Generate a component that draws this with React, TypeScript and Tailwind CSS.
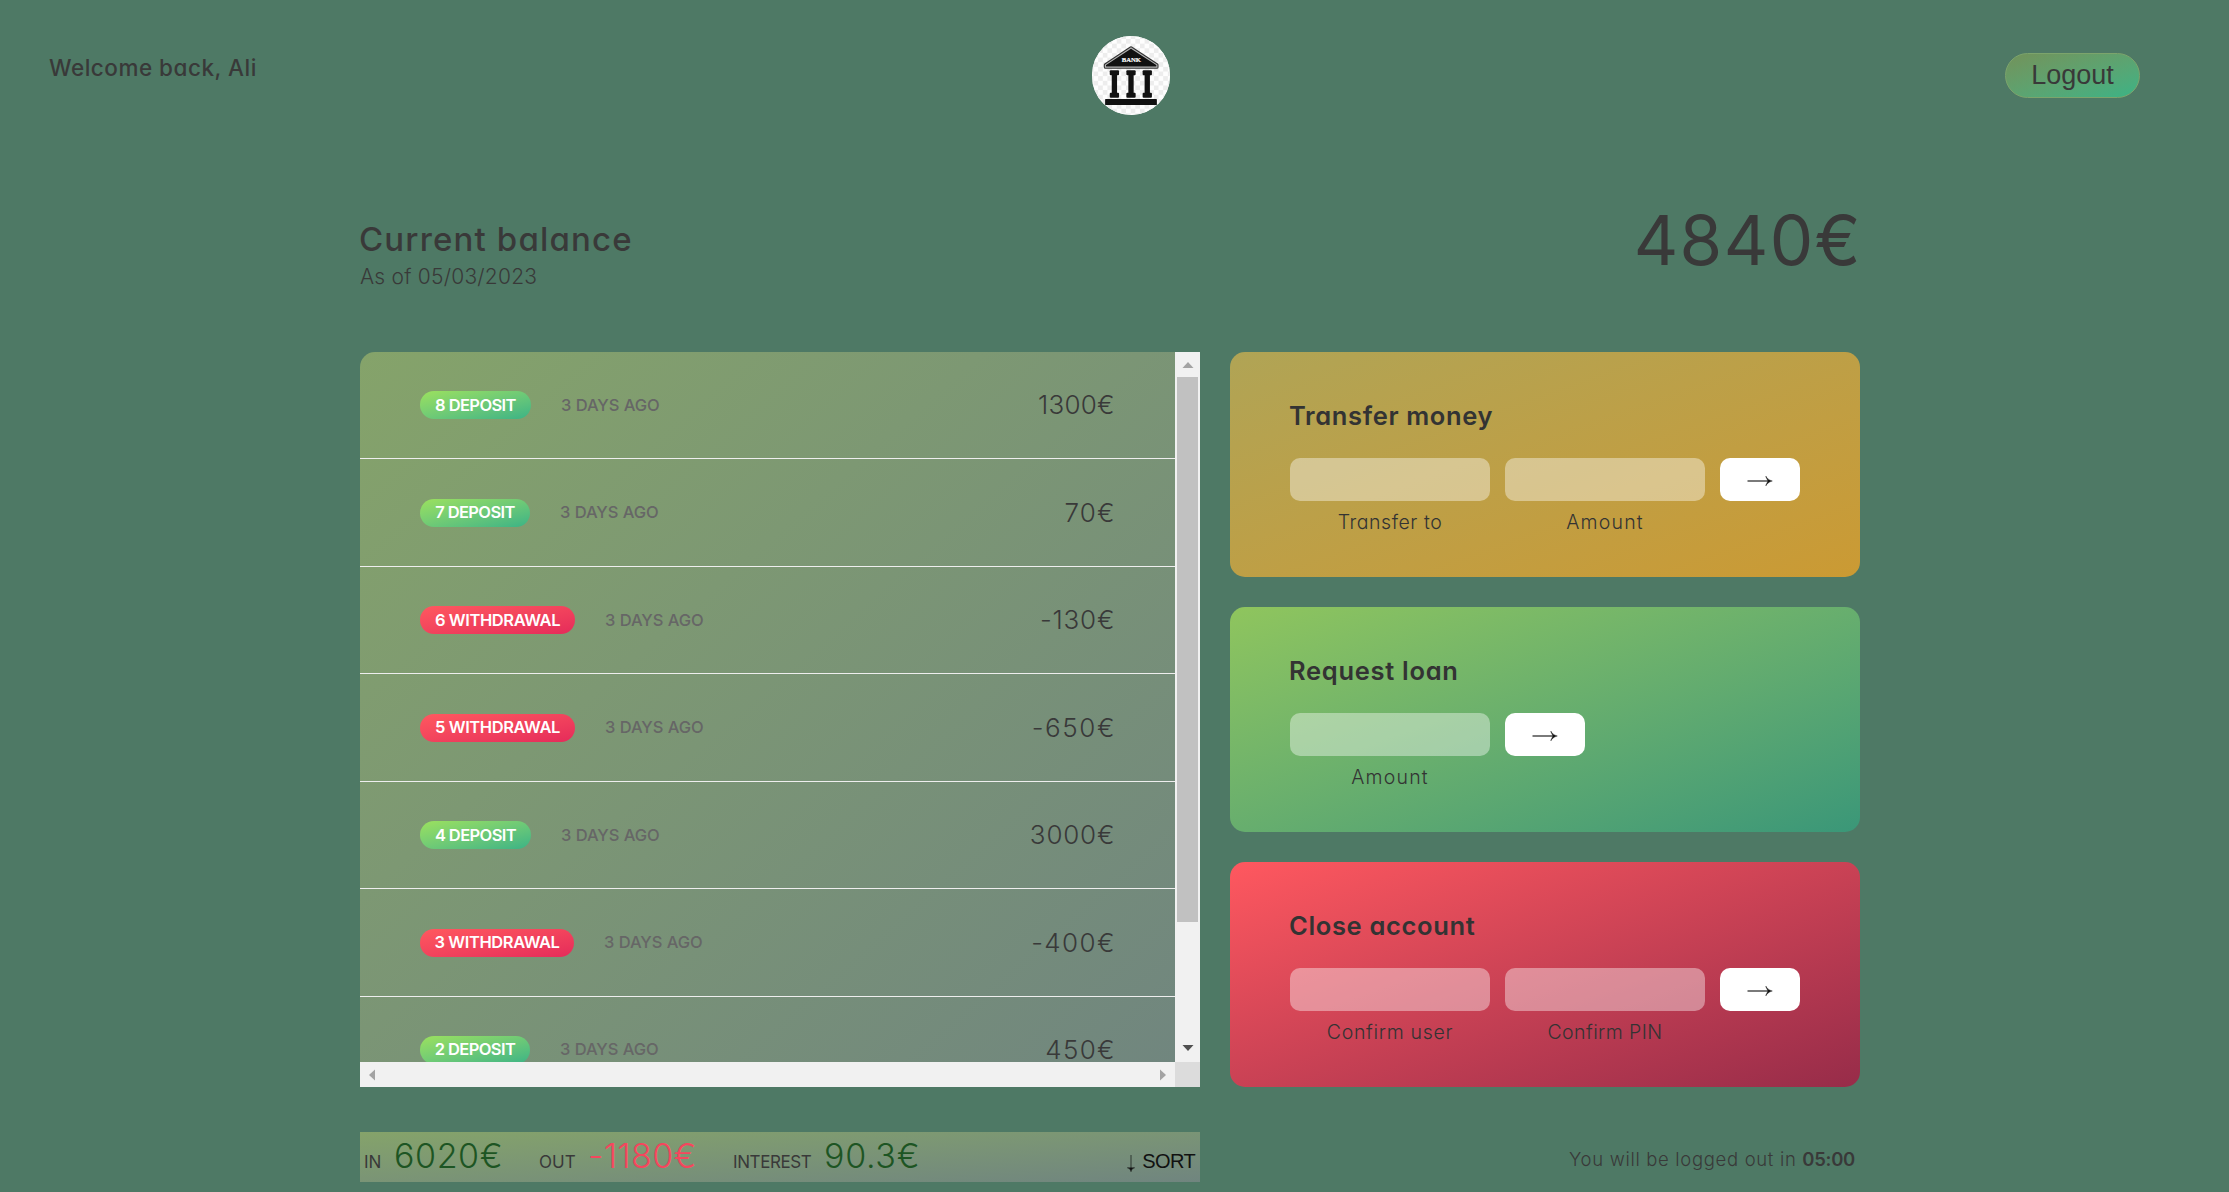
import type { ReactNode } from "react";

type Movement = {
  id: number;
  kind: "deposit" | "withdrawal";
  value: string;
  pill: string;
  row: string;
  tracking: string;
};

const movements: Movement[] = [
  { id: 8, kind: "deposit", value: "1300€", pill: "w-[111px]", row: "h-[107px]", tracking: "tracking-[0.2px] mr-[0.3px]" },
  { id: 7, kind: "deposit", value: "70€", pill: "w-[110px]", row: "h-[108px]", tracking: "tracking-[1.2px] -mr-[0.7px]" },
  { id: 6, kind: "withdrawal", value: "-130€", pill: "w-[155px]", row: "h-[107px]", tracking: "tracking-[0.8px] -mr-[0.3px]" },
  { id: 5, kind: "withdrawal", value: "-650€", pill: "w-[155px]", row: "h-[108px]", tracking: "tracking-[1.6px] -mr-[1.1px]" },
  { id: 4, kind: "deposit", value: "3000€", pill: "w-[111px]", row: "h-[107px]", tracking: "tracking-[0.8px] -mr-[0.3px]" },
  { id: 3, kind: "withdrawal", value: "-400€", pill: "w-[154px]", row: "h-[108px]", tracking: "tracking-[1.4px] -mr-[0.9px]" },
  { id: 2, kind: "deposit", value: "450€", pill: "w-[110px]", row: "h-[106px]", tracking: "tracking-[1.3px] -mr-[0.8px]" },
];

function BankLogo() {
  return (
    <svg viewBox="66 47 234 238" className="ml-px h-[79px] w-[78px] rounded-full bg-white">
      <defs>
        <pattern id="checks" width="28" height="28" patternUnits="userSpaceOnUse">
          <rect width="28" height="28" fill="#fefefe" />
          <rect width="14" height="14" fill="#ededed" />
          <rect x="14" y="14" width="14" height="14" fill="#ededed" />
        </pattern>
      </defs>
      <rect x="66" y="47" width="234" height="238" fill="url(#checks)" />
      <path d="M183 83 L261 134 V141 H106 V134 Z" fill="#111" stroke="#333" strokeWidth="10" strokeLinejoin="round" />
      <path d="M183 83 L261 134 V141 H106 V134 Z" fill="#111" stroke="#b5b5b5" strokeWidth="3.5" strokeLinejoin="round" />
      <text x="184" y="126" textAnchor="middle" textLength="58" lengthAdjust="spacingAndGlyphs" fill="#fff" stroke="#fff" strokeWidth="0.6" className="font-['Liberation_Serif',serif] text-[21px] font-bold">
        BANK
      </text>
      {[119, 169, 218].map((x) => (
        <g key={x} fill="#111">
          <rect x={x} y="150" width="28" height="15" rx="3" />
          <rect x={x + 6} y="163" width="16" height="58" />
          <rect x={x} y="218" width="28" height="15" rx="3" />
        </g>
      ))}
      <rect x="105" y="237" width="156" height="18" rx="2" fill="#111" />
    </svg>
  );
}

function ArrowButton() {
  return (
    <button className="flex h-[43px] w-20 items-center justify-center rounded-[10px] bg-white">
      <svg viewBox="0 0 26 12" className="mt-[3px] ml-[-1px] h-3 w-[26px]">
        <path d="M0.5 6 H22" stroke="#222" strokeWidth="1.2" fill="none" />
        <path d="M19 1.2 C20 3.4 21.8 5.1 25.3 6 C21.8 6.9 20 8.6 19 10.8 L18.8 10.2 L21 6 L18.8 1.8 Z" fill="#111" stroke="#111" strokeWidth="0.4" />
      </svg>
    </button>
  );
}

function Field({ label, tracking }: { label: string; tracking: string }) {
  return (
    <label className="flex w-[200px] flex-col items-center">
      <span className="h-[43px] w-full rounded-[10px] bg-white/40" />
      <span className={`mt-[9px] text-[19.5px] leading-6 font-light text-[#333] ${tracking}`}>{label}</span>
    </label>
  );
}

function OperationCard({ title, className, tracking, children }: { title: string; className: string; tracking: string; children: ReactNode }) {
  return (
    <section className={`h-[225px] rounded-[15px] bg-linear-to-br px-[60px] pt-[49px] ${className}`}>
      <h2 className={`-ml-px text-[25.5px] leading-[30px] font-semibold text-[#333] ${tracking}`}>{title}</h2>
      <div className="mt-[27px] flex gap-[15px]">{children}</div>
    </section>
  );
}

function Triangle({ points, className }: { points: string; className: string }) {
  return (
    <svg viewBox="0 0 12 12" className={`size-3 ${className}`}>
      <polygon points={points} />
    </svg>
  );
}

export default function App() {
  return (
    <div className="h-[1192px] w-[2229px] overflow-hidden bg-[#4e7965] font-[Inter,sans-serif] text-[#393939] [font-feature-settings:'cv11']">
      <nav className="flex h-[151px] items-center justify-between pr-[89px] pl-[49px]">
        <p className="-mt-[15px] text-[22.5px] leading-7 font-medium tracking-[0.5px] whitespace-nowrap">Welcome back, Ali</p>
        <BankLogo />
        <button className="h-[45px] w-[135px] rounded-full border border-[#7ca46c] bg-linear-to-br from-[#72925a] to-[#39b385] font-['Liberation_Sans',sans-serif] text-[27px] leading-none">
          Logout
        </button>
      </nav>

      <main className="ml-[360px] w-[1500px]">
        <div className="flex h-[201px] justify-between">
          <div className="pt-[68px]">
            <p className="-ml-px text-[33px] leading-10 font-medium tracking-[1.15px]">Current balance</p>
            <p className="mt-1 text-[21px] leading-[27px] font-light tracking-[0.22px]">As of 05/03/2023</p>
          </div>
          <p className="-mr-[2px] pt-[49px] text-[69px] leading-[80px] tracking-[1.4px]">4840€</p>
        </div>

        <div className="grid grid-cols-[840px_630px] gap-x-[30px]">
          <div className="grid h-[735px] grid-cols-[815px_25px] grid-rows-[710px_25px] overflow-hidden rounded-tl-[15px] bg-linear-to-br from-[#85a36a] to-[#70857f]">
            <div className="overflow-hidden">
              {movements.map((m) => (
                <div key={m.id} className={`flex items-center border-b border-[#eee] pr-[60px] pl-[60px] ${m.row}`}>
                  <span
                    className={`flex h-7 items-center justify-center rounded-full bg-linear-to-br text-[16.5px] font-semibold whitespace-nowrap text-white ${m.pill} ${
                      m.kind === "deposit" ? "from-[#9be15d] to-[#39b385] tracking-[-0.6px]" : "from-[#ff585f] to-[#e52a5a] tracking-[-0.4px]"
                    }`}
                  >
                    {m.id} {m.kind.toUpperCase()}
                  </span>
                  <span className="ml-[30px] text-[16.5px] font-medium tracking-[-0.05px] text-[#666]">3 DAYS AGO</span>
                  <span className={`ml-auto text-[26px] leading-7 font-light ${m.tracking}`}>{m.value}</span>
                </div>
              ))}
            </div>
            <div className="flex flex-col items-center bg-[#f1f1f1]">
              <div className="flex h-[25px] shrink-0 items-center">
                <Triangle points="0.5,9 11.5,9 6,3" className="fill-[#a3a3a3]" />
              </div>
              <div className="h-[545px] w-[21px] bg-[#c1c1c1]" />
              <div className="mt-auto flex h-[26px] items-start pt-1.5">
                <Triangle points="0.5,3 11.5,3 6,9" className="fill-[#505050]" />
              </div>
            </div>
            <div className="flex items-center justify-between bg-[#f1f1f1] px-[6px]">
              <Triangle points="9,0.5 9,11.5 3,6" className="fill-[#a3a3a3]" />
              <Triangle points="3,0.5 3,11.5 9,6" className="fill-[#a3a3a3]" />
            </div>
            <div className="bg-[#dcdcdc]" />
          </div>

          <div className="flex flex-col gap-[30px]">
            <OperationCard title="Transfer money" className="from-[#b0a455] to-[#cb9a33]" tracking="tracking-[0.65px]">
              <Field label="Transfer to" tracking="tracking-[0.55px]" />
              <Field label="Amount" tracking="tracking-[1.2px]" />
              <ArrowButton />
            </OperationCard>
            <OperationCard title="Request loan" className="from-[#8fc55d] to-[#3a9778]" tracking="tracking-[0.7px]">
              <Field label="Amount" tracking="tracking-[1.2px]" />
              <ArrowButton />
            </OperationCard>
            <OperationCard title="Close account" className="from-[#ff585f] to-[#972c49]" tracking="tracking-[0.65px]">
              <Field label="Confirm user" tracking="tracking-[0.7px]" />
              <Field label="Confirm PIN" tracking="tracking-[0.42px]" />
              <ArrowButton />
            </OperationCard>
          </div>
        </div>

        <div className="mt-[45px] grid grid-cols-[840px_630px] gap-x-[30px]">
          <div className="flex h-[50px] items-baseline bg-linear-to-br from-[#85a36a] to-[#70857f] pt-1 pl-1 leading-10 whitespace-nowrap">
            <span className="w-[30px] text-[17px]">IN</span>
            <span className="w-[145px] text-[34px] font-light tracking-[0.6px] text-[#1d5523]">6020€</span>
            <span className="w-[49px] text-[17px]">OUT</span>
            <span className="w-[145px] text-[34px] font-light tracking-[0.3px] text-[#f5465d]">-1180€</span>
            <span className="w-[91px] text-[17px] tracking-[-0.4px]">INTEREST</span>
            <span className="text-[34px] font-light tracking-[0.7px] text-[#1d5523]">90.3€</span>
            <button className="mr-[5px] ml-auto flex items-baseline gap-[7px] font-['Liberation_Sans',sans-serif] text-[20px] tracking-[-0.6px] text-[#111]">
              <svg viewBox="0 0 8 17" className="h-[17px] w-2 translate-y-1">
                <path d="M4 0 V13" stroke="#3a453d" strokeWidth="1.2" fill="none" />
                <path d="M0.3 12.8 C2 13.2 3.4 14 4 16.8 C4.6 14 6 13.2 7.7 12.8 Z" fill="#111" stroke="#111" strokeWidth="0.4" />
              </svg>
              SORT
            </button>
          </div>
          <p className="pt-[15px] pr-[5px] text-right text-[18.5px] leading-6 font-light tracking-[0.67px]">
            You will be logged out in <span className="font-semibold tracking-[-0.3px]">05:00</span>
          </p>
        </div>
      </main>
    </div>
  );
}
